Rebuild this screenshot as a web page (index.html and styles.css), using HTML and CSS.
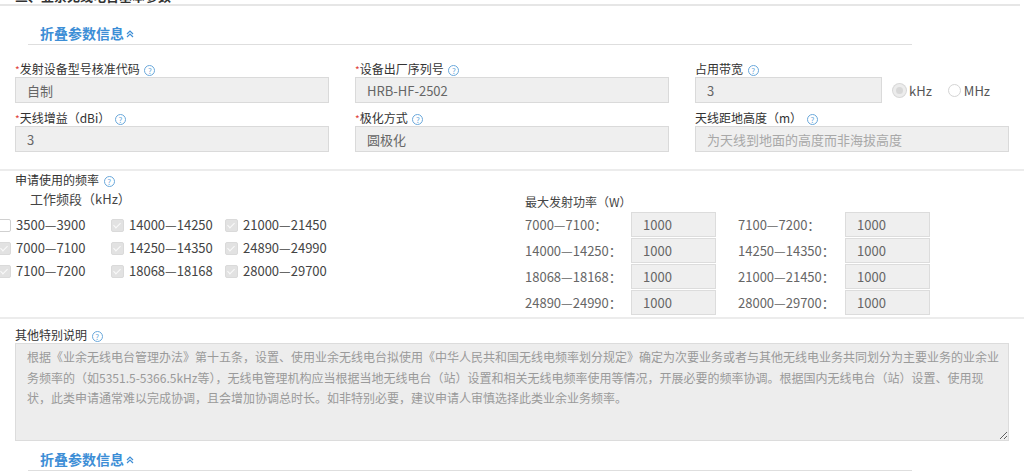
FILE: index.html
```html
<!DOCTYPE html>
<html>
   <head>
      <meta charset="utf-8">
      <meta name="viewport" content="width=device-width, initial-scale=1">
      <title>业余无线电台基本参数</title>
      <link rel="stylesheet" href="styles.css">
   </head>
   <body>
      <div class="sec-title">三、业余无线电台基本参数</div>

      <div class="fold">折叠参数信息<svg class="fold-arrow" width="8" height="8" viewBox="0 0 8 8"><path d="M1 4 L4 1 L7 4 M1 7 L4 4 L7 7" fill="none" stroke="#3d8ed6" stroke-width="1.2"/></svg></div>

      <div class="fields">
        <div class="field">
          <div class="label"><span class="req">*</span>发射设备型号核准代码 <span class="help">?</span></div>
          <input class="inp" type="text" value="自制" disabled>
        </div>
        <div class="field">
          <div class="label"><span class="req">*</span>设备出厂序列号 <span class="help">?</span></div>
          <input class="inp" type="text" value="HRB-HF-2502" disabled>
        </div>
        <div class="field">
          <div class="label">占用带宽 <span class="help">?</span></div>
          <div class="bw-row">
            <input class="inp bw" type="text" value="3" disabled>
            <label class="radio"><span class="dot on"></span>kHz</label>
            <label class="radio"><span class="dot"></span>MHz</label>
          </div>
        </div>
        <div class="field">
          <div class="label"><span class="req">*</span>天线增益（dBi） <span class="help">?</span></div>
          <input class="inp" type="text" value="3" disabled>
        </div>
        <div class="field">
          <div class="label"><span class="req">*</span>极化方式 <span class="help">?</span></div>
          <input class="inp" type="text" value="圆极化" disabled>
        </div>
        <div class="field">
          <div class="label">天线距地高度（m） <span class="help">?</span></div>
          <input class="inp" type="text" placeholder="为天线到地面的高度而非海拔高度" disabled>
        </div>
      </div>

      <div class="sep"></div>

      <div class="freq">
        <div class="label sub">申请使用的频率 <span class="help">?</span></div>
        <div class="freq-body">
          <div class="bands">
            <div class="band-title">工作频段（kHz）</div>
            <div class="cb-grid">
              <label class="cb"><span class="box"></span>3500—3900</label>
              <label class="cb"><span class="box on"></span>14000—14250</label>
              <label class="cb"><span class="box on"></span>21000—21450</label>
              <label class="cb"><span class="box on"></span>7000—7100</label>
              <label class="cb"><span class="box on"></span>14250—14350</label>
              <label class="cb"><span class="box on"></span>24890—24990</label>
              <label class="cb"><span class="box on"></span>7100—7200</label>
              <label class="cb"><span class="box on"></span>18068—18168</label>
              <label class="cb"><span class="box on"></span>28000—29700</label>
            </div>
          </div>
          <div class="power">
            <div class="band-title">最大发射功率（W）</div>
            <div class="pw-grid">
              <span class="pw-label">7000—7100：</span><input class="pw" value="1000" disabled>
              <span class="pw-label r">7100—7200：</span><input class="pw" value="1000" disabled>
              <span class="pw-label">14000—14250：</span><input class="pw" value="1000" disabled>
              <span class="pw-label r">14250—14350：</span><input class="pw" value="1000" disabled>
              <span class="pw-label">18068—18168：</span><input class="pw" value="1000" disabled>
              <span class="pw-label r">21000—21450：</span><input class="pw" value="1000" disabled>
              <span class="pw-label">24890—24990：</span><input class="pw" value="1000" disabled>
              <span class="pw-label r">28000—29700：</span><input class="pw" value="1000" disabled>
            </div>
          </div>
        </div>
      </div>

      <div class="sep sep-tight"></div>

      <div class="other">
        <div class="label">其他特别说明 <span class="help">?</span></div>
        <textarea class="note" disabled>根据《业余无线电台管理办法》第十五条，设置、使用业余无线电台拟使用《中华人民共和国无线电频率划分规定》确定为次要业务或者与其他无线电业务共同划分为主要业务的业余业
务频率的（如5351.5-5366.5kHz等），无线电管理机构应当根据当地无线电台（站）设置和相关无线电频率使用等情况，开展必要的频率协调。根据国内无线电台（站）设置、使用现
状，此类申请通常难以完成协调，且会增加协调总时长。如非特别必要，建议申请人审慎选择此类业余业务频率。</textarea>
      </div>

      <div class="fold fold-bottom">折叠参数信息<svg class="fold-arrow" width="8" height="8" viewBox="0 0 8 8"><path d="M1 4 L4 1 L7 4 M1 7 L4 4 L7 7" fill="none" stroke="#3d8ed6" stroke-width="1.2"/></svg></div>
   </body>
</html>
```

FILE: styles.css
```css
body {
  margin: 0;
  font-family: "Noto Sans CJK SC", "Noto Sans", sans-serif;
  color: #333;
  background: #fff;
  overflow: hidden;
}
.sec-title {
  margin-top: -13px;
  padding-left: 15px;
  height: 17px;
  font-size: 13px;
  font-weight: bold;
  color: #333;
  border-bottom: 2px solid #e6e6e6;
  margin-right: 4px;
  line-height: 17px;
}
.fold {
  margin: 16px 0 0 28px;
  width: 872px;
  padding-left: 12px;
  height: 22px;
  line-height: 22px;
  font-size: 14px;
  font-weight: bold;
  color: #3d8ed6;
  border-bottom: 1px solid #dedede;
}
.fold-arrow {
  margin-left: 2px;
  vertical-align: 1px;
}
.fold-bottom {
  margin-top: 7px;
}
.fields {
  display: grid;
  grid-template-columns: 314px 314px 314px;
  column-gap: 26px;
  row-gap: 7px;
  padding: 16px 0 0 15px;
}
.label {
  font-size: 12px;
  line-height: 16px;
  height: 16px;
  color: #333;
}
.req {
  color: #e0413a;
  font-size: 10px;
}
.help {
  display: inline-block;
  width: 9px;
  height: 9px;
  border: 1px solid #6aa8db;
  border-radius: 50%;
  color: #6aa8db;
  font-size: 8px;
  line-height: 9px;
  text-align: center;
  vertical-align: 0px;
  margin-left: 2px;
}
.inp {
  display: block;
  box-sizing: border-box;
  width: 314px;
  height: 26px;
  margin: 0;
  padding: 0 11px;
  background: #efefef;
  border: 1px solid #dadada;
  font-family: inherit;
  font-size: 13px;
  color: #666;
}
.inp::placeholder {
  color: #a8a8a8;
}
.bw-row {
  display: flex;
  align-items: center;
}
.inp.bw {
  width: 187px;
}
.radio {
  display: flex;
  align-items: center;
  font-size: 13px;
  color: #555;
  margin-left: 11px;
}
.radio + .radio {
  margin-left: 16px;
}
.dot {
  width: 13px;
  height: 13px;
  border: 1px solid #d4d4d4;
  border-radius: 50%;
  background: #fff;
  margin-right: 3px;
  box-sizing: border-box;
}
.dot.on {
  background: #d8d8d8;
  border: 3px solid #ececec;
  box-shadow: 0 0 0 1px #d8d8d8;
}
.sep {
  height: 2px;
  background: #ececec;
  margin-top: 17px;
}
.sep-tight {
  margin-top: 2px;
}
.freq {
  padding-top: 1px;
}
.freq .sub {
  padding-left: 15px;
}
.freq-body {
  display: flex;
}
.bands {
  width: 525px;
}
.band-title {
  font-size: 12px;
  line-height: 16px;
  color: #444;
  padding-left: 30px;
  margin-top: 3px;
}
.bands .band-title {
  font-size: 13px;
}
.cb-grid {
  display: grid;
  grid-template-columns: 113px 114px 114px;
  row-gap: 7px;
  margin: 10px 0 0 -2px;
}
.cb {
  display: flex;
  align-items: center;
  font-size: 13px;
  line-height: 16px;
  color: #444;
}
.box {
  width: 13px;
  height: 13px;
  box-sizing: border-box;
  border: 1px solid #d0d0d0;
  border-radius: 2px;
  background: #fff;
  margin-right: 5px;
  position: relative;
}
.box.on {
  background: #e2e2e2;
  border-color: #dadada;
}
.box.on::after {
  content: "";
  position: absolute;
  left: 3px;
  top: 1px;
  width: 3px;
  height: 6px;
  border: solid #fafafa;
  border-width: 0 1.5px 1.5px 0;
  transform: rotate(45deg);
}
.power .band-title {
  padding-left: 0;
  margin-top: 6px;
}
.pw-grid {
  display: grid;
  grid-template-columns: 106px 85px 129px 85px;
  grid-auto-rows: 25px;
  row-gap: 1px;
  margin-top: 2px;
}
.pw-label {
  font-size: 13px;
  line-height: 25px;
  color: #666;
}
.pw-label.r {
  padding-left: 22px;
}
.pw {
  box-sizing: border-box;
  width: 85px;
  height: 25px;
  margin: 0;
  padding: 0 11px;
  background: #efefef;
  border: 1px solid #dcdcdc;
  font-family: inherit;
  font-size: 13px;
  color: #666;
}
.other {
  padding: 8px 0 0 15px;
}
.note {
  display: block;
  box-sizing: border-box;
  width: 994px;
  height: 98px;
  margin: 0;
  padding: 3px 4px 3px 11px;
  background: #ededed;
  border: 1px solid #dcdcdc;
  font-family: inherit;
  font-size: 12px;
  line-height: 20.5px;
  color: #9a9a9a;
  resize: vertical;
  overflow: hidden;
  white-space: pre-wrap;
}
```
